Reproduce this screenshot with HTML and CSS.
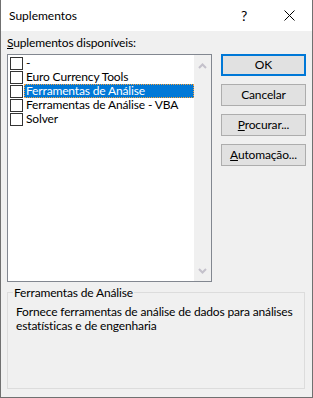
FILE: index.html
```html
<!DOCTYPE html>
<html lang="pt">
<head>
    <meta charset="UTF-8">
    <meta name="viewport" content="width=device-width, initial-scale=1.0">
    <title>Suplementos</title>
    <link rel="stylesheet" href="styles.css">
</head>
<body>
    <div class="window">
        <!-- Title bar -->
        <div class="titlebar">
            <span class="title">Suplementos</span>
            <span class="help">?</span>
            <svg class="close" width="11" height="11" viewBox="0 0 11 11">
                <path d="M0.5 0.5 L10.5 10.5 M10.5 0.5 L0.5 10.5" stroke="#000" stroke-width="1" fill="none"/>
            </svg>
        </div>

        <div class="content">
            <div class="main">
                <div class="left">
                    <div class="label"><u>S</u>uplementos disponíveis:</div>
                    <div class="listbox">
                        <div class="items">
                            <div class="item"><span class="check"></span><span class="text">-</span></div>
                            <div class="item"><span class="check"></span><span class="text">Euro Currency Tools</span></div>
                            <div class="item"><span class="check"></span><span class="text selected">Ferramentas de Análise</span></div>
                            <div class="item"><span class="check"></span><span class="text">Ferramentas de Análise - VBA</span></div>
                            <div class="item"><span class="check"></span><span class="text">Solver</span></div>
                        </div>
                        <div class="scrollbar">
                            <svg width="9" height="6" viewBox="0 0 9 6">
                                <path d="M1 5 L4.5 1.5 L8 5" stroke="#c4c1cb" stroke-width="2" fill="none"/>
                            </svg>
                            <svg width="9" height="6" viewBox="0 0 9 6">
                                <path d="M1 1 L4.5 4.5 L8 1" stroke="#c4c1cb" stroke-width="2" fill="none"/>
                            </svg>
                        </div>
                    </div>
                </div>
                <div class="buttons">
                    <div class="button default">OK</div>
                    <div class="button">Cancelar</div>
                    <div class="button"><u>P</u>rocurar...</div>
                    <div class="button"><u>A</u>utomação...</div>
                </div>
            </div>

            <fieldset class="group">
                <legend>Ferramentas de Análise</legend>
                <p>Fornece ferramentas de análise de dados para análises estatísticas e de engenharia</p>
            </fieldset>
        </div>
    </div>
</body>
</html>
```

FILE: styles.css
```css
* {
    box-sizing: border-box;
    margin: 0;
    padding: 0;
}

body {
    font-family: Lato, "Noto Sans", Arial, sans-serif;
    font-size: 12px;
    letter-spacing: -0.15px;
    color: #000;
    background-color: #f0f0f0;
}

.window {
    width: 313px;
    height: 398px;
    background: #f0f0f0;
    border: 1px solid #707070;
    border-top: none;
}

.titlebar {
    height: 31px;
    background: #fff;
    display: flex;
    align-items: center;
    padding-left: 8px;
}

.title {
    flex: 1;
    line-height: 15px;
    margin-top: -1px;
    letter-spacing: 0;
}

.help {
    font-size: 14px;
    margin-right: 37px;
    margin-top: -1px;
}

.close {
    margin-right: 17px;
}

.content {
    padding: 4px 5px 0 6px;
}

.main {
    display: flex;
    gap: 9px;
}

.label {
    line-height: 15px;
    margin-bottom: 4px;
}

.listbox {
    width: 205px;
    height: 228px;
    border: 1px solid #828790;
    background: #fff;
    display: flex;
}

.items {
    flex: 1;
    padding: 1px 0 0 2px;
}

.item {
    height: 14px;
    display: flex;
    align-items: center;
}

.check {
    width: 13px;
    height: 13px;
    border: 1px solid #333;
    background: #fff;
    margin-top: 1px;
}

.text {
    margin-left: 1px;
    padding: 0 2px 0 2px;
    height: 14px;
    line-height: 14px;
    white-space: nowrap;
}

.text.selected {
    flex: 1;
    background: #0078d7;
    color: #fff;
    outline: 1px dotted #f7a23c;
    outline-offset: -1px;
}

.scrollbar {
    width: 17px;
    background: #f0f0f0;
    display: flex;
    flex-direction: column;
    justify-content: space-between;
    align-items: center;
    padding: 8px 0 7px;
}

.buttons {
    margin-top: 19px;
    display: flex;
    flex-direction: column;
    gap: 8px;
}

.button {
    width: 85px;
    height: 22px;
    background: #e1e1e1;
    border: 1px solid #adadad;
    text-align: center;
    line-height: 20px;
}

.button.default {
    border: 2px solid #0078d7;
    line-height: 18px;
}

.group {
    margin-top: 3px;
    width: 298px;
    height: 104px;
    border: 1px solid #dcdcdc;
    padding: 5px 2px 0 8px;
}

.group legend {
    margin-left: -3px;
    padding: 0 1px;
    line-height: 15px;
}

.group p {
    line-height: 14px;
}
```
